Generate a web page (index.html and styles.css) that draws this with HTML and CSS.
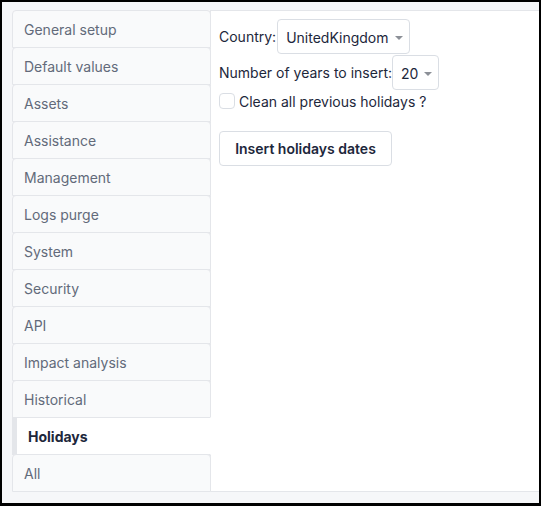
FILE: index.html
```html
<!DOCTYPE html>
<html>
<head>
<meta charset="utf-8">
<link rel="stylesheet" href="styles.css">
</head>
<body>
<div class="frame">
  <div class="card">
    <ul class="tabs">
      <li class="tab">General setup</li>
      <li class="tab">Default values</li>
      <li class="tab">Assets</li>
      <li class="tab">Assistance</li>
      <li class="tab">Management</li>
      <li class="tab">Logs purge</li>
      <li class="tab">System</li>
      <li class="tab">Security</li>
      <li class="tab">API</li>
      <li class="tab">Impact analysis</li>
      <li class="tab">Historical</li>
      <li class="tab active">Holidays</li>
      <li class="tab">All</li>
    </ul>
    <div class="content">
      <div class="row row-country">
        <span class="label">Country:</span>
        <span class="select select-country">UnitedKingdom<span class="caret"></span></span>
      </div>
      <div class="row row-years">
        <span class="label">Number of years to insert:</span>
        <span class="select select-years">20<span class="caret"></span></span>
      </div>
      <label class="check-row">
        <span class="checkbox"></span>
        <span class="check-label">Clean all previous holidays ?</span>
      </label>
      <button class="btn">Insert holidays dates</button>
    </div>
  </div>
</div>
</body>
</html>
```

FILE: styles.css
```css
* { box-sizing: border-box; }
html, body { margin: 0; padding: 0; background: #000; }
body { font-family: Inter, "Noto Sans", sans-serif; font-size: 14px; }

.frame {
  width: 541px;
  height: 506px;
  border: solid #000;
  border-width: 2px 2px 3px 2px;
  background: #f6f7f9;
  padding: 8px 0 11px 10px;
  display: flex;
  overflow: hidden;
}

.card {
  display: flex;
  flex: 1;
  align-items: stretch;
}

.tabs {
  list-style: none;
  margin: 0;
  padding: 0;
  width: 199px;
  flex: none;
  position: relative;
  z-index: 1;
}

.tab {
  height: 38px;
  margin-bottom: -1px;
  border: 1px solid #e4e6ea;
  background: #f9fafb;
  color: #626a7a;
  line-height: 38px;
  padding-left: 11px;
  border-radius: 4px 4px 0 0;
}

.tab.active {
  background: #fff;
  color: #1d273b;
  font-weight: 700;
  border-left: 5px solid #e4e6ea;
  border-right-color: #fff;
  border-radius: 0;
}

.content {
  flex: 1;
  background: #fff;
  border-top: 1px solid #e4e6ea;
  border-bottom: 1px solid #e4e6ea;
  border-left: 1px solid #e4e6ea;
  margin-left: -1px;
  padding: 8px 0 0 8px;
  color: #1d273b;
}

.row {
  display: flex;
  align-items: center;
  height: 35px;
}

.row-years { margin-top: 1px; }

.select {
  display: inline-flex;
  align-items: center;
  height: 35px;
  border: 1px solid #dadee4;
  border-radius: 4px;
  background: #fff;
  padding: 1px 6px 0 8px;
  color: #1d273b;
}

.select-country { margin-left: 1px; }

.caret {
  display: inline-block;
  width: 0;
  height: 0;
  border-left: 4px solid transparent;
  border-right: 4px solid transparent;
  border-top: 4px solid #8c9097;
  margin-left: 6px;
  margin-top: 1px;
}

.check-row {
  display: flex;
  align-items: center;
  height: 18px;
  margin-top: 2px;
}

.checkbox {
  width: 16px;
  height: 16px;
  border: 1px solid #dadee4;
  border-radius: 4px;
  background: #fff;
  margin-right: 4px;
  flex: none;
}

.check-label { color: #1d273b; }

.btn {
  display: block;
  margin-top: 21px;
  height: 35px;
  width: 173px;
  border: 1px solid #dadee4;
  border-radius: 4px;
  background: #fff;
  font-family: inherit;
  font-size: 14px;
  font-weight: 600;
  color: #1d273b;
  padding: 0;
}
```
